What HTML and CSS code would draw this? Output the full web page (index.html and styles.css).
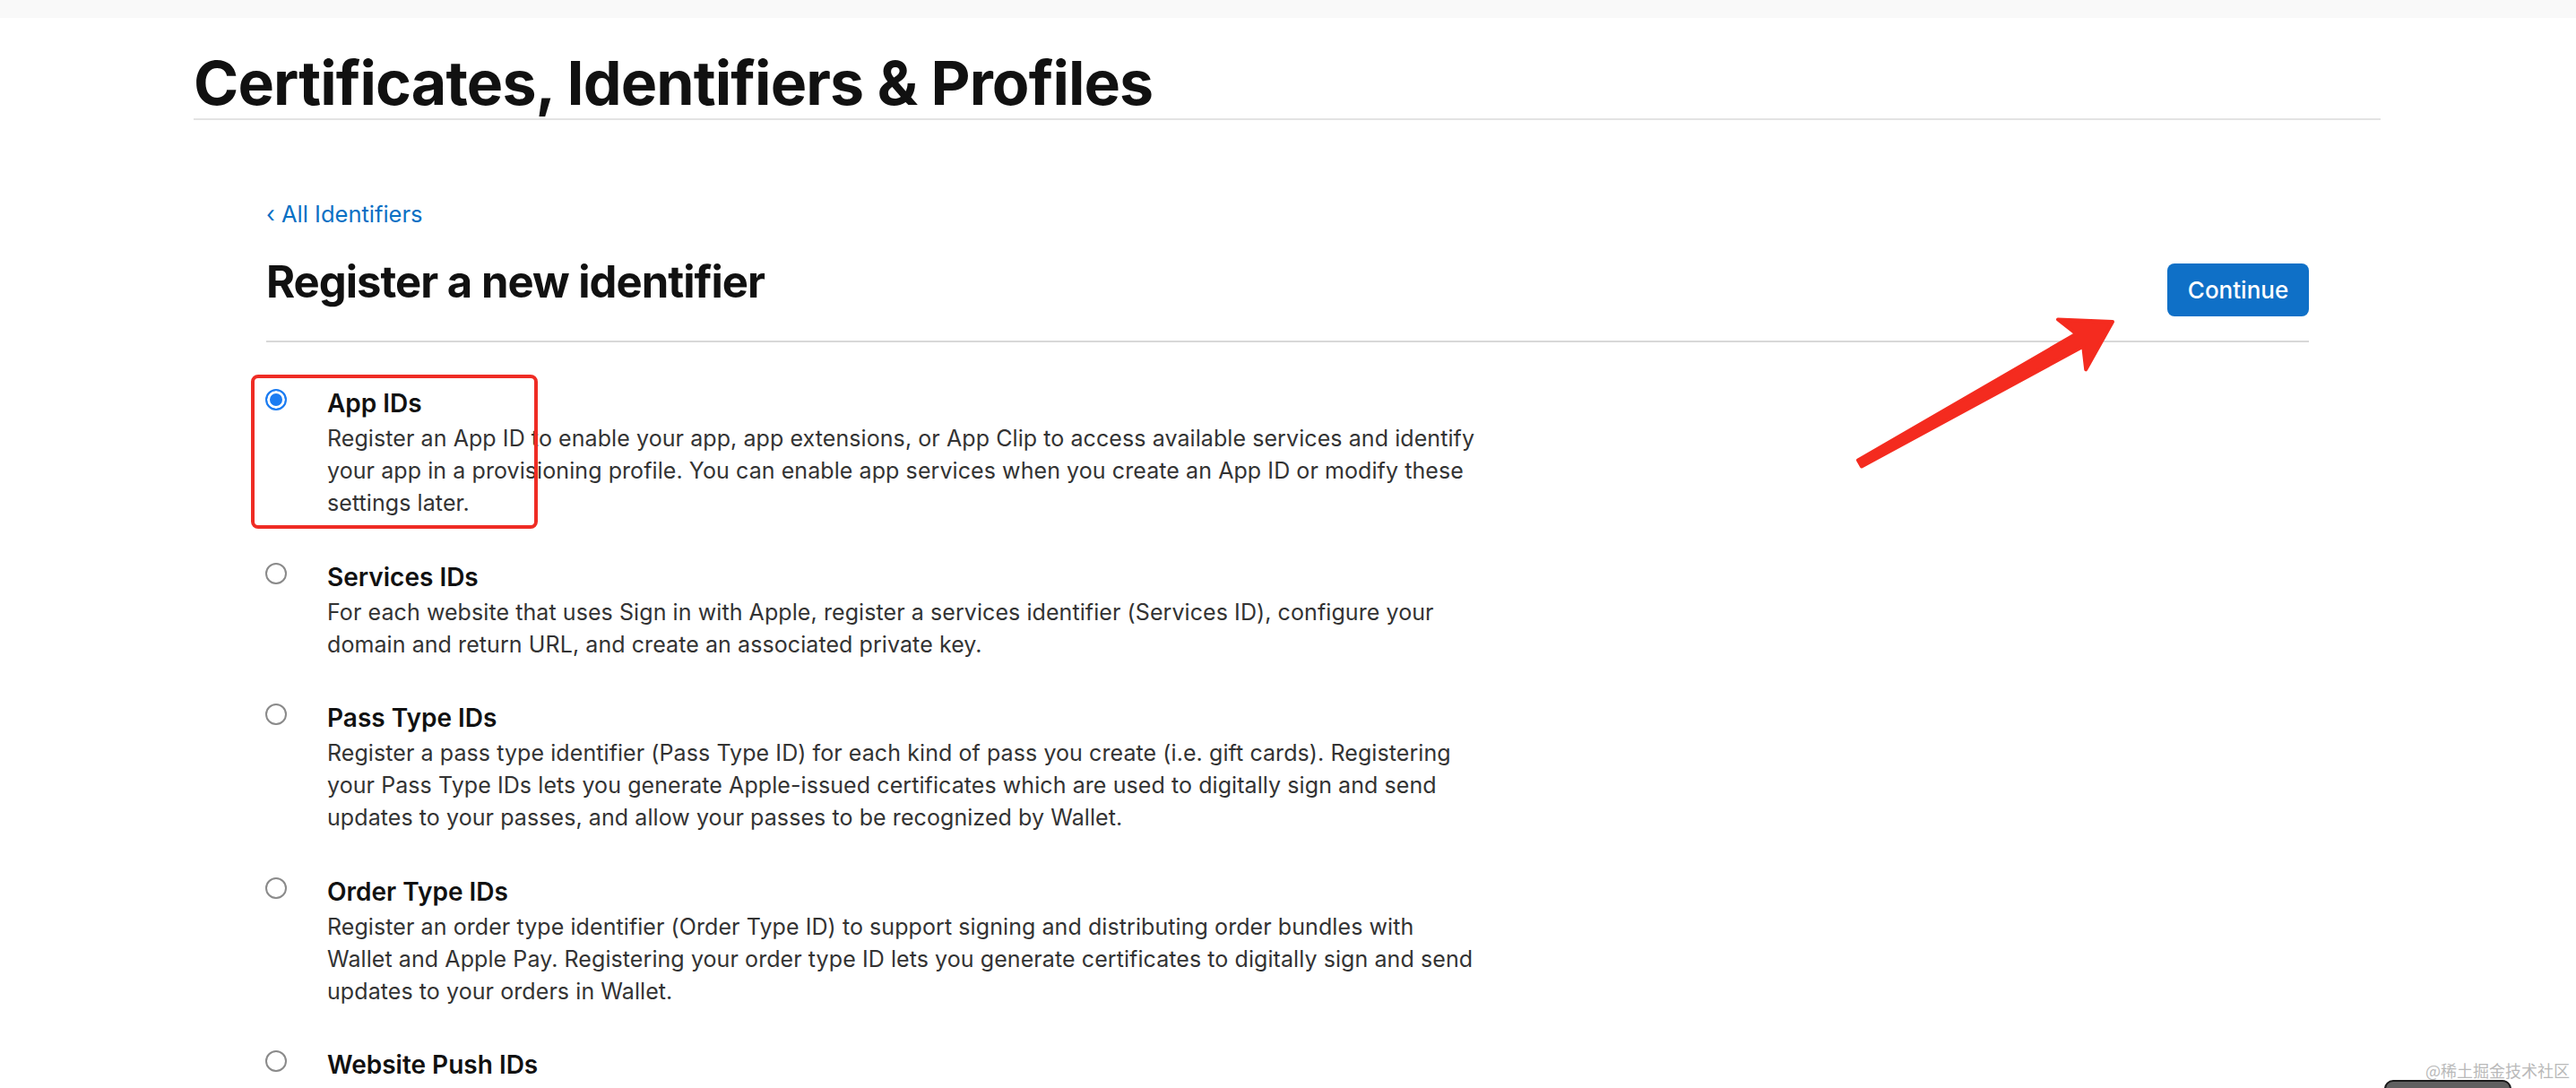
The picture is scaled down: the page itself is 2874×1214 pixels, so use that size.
FILE: index.html
```html
<!DOCTYPE html>
<html lang="en">
<head>
<meta charset="utf-8">
<title>Certificates, Identifiers &amp; Profiles</title>
<link rel="stylesheet" href="styles.css">
</head>
<body>
<div class="topbar"></div>

<header class="page-header">
  <h1 class="page-title">Certificates, Identifiers &amp; Profiles</h1>
</header>

<main class="content">
  <a class="back-link" href="#">&#8249; All Identifiers</a>

  <div class="title-row">
    <h2 class="section-title">Register a new identifier</h2>
    <button class="btn-continue" type="button">Continue</button>
  </div>

  <ul class="choices">
    <li class="choice">
      <span class="radio checked"></span>
      <div class="choice-body">
        <div class="choice-title">App IDs</div>
        <p class="choice-desc">Register an App ID to enable your app, app extensions, or App Clip to access available services and identify<br>your app in a provisioning profile. You can enable app services when you create an App ID or modify these<br>settings later.</p>
      </div>
    </li>
    <li class="choice">
      <span class="radio"></span>
      <div class="choice-body">
        <div class="choice-title">Services IDs</div>
        <p class="choice-desc">For each website that uses Sign in with Apple, register a services identifier (Services ID), configure your<br>domain and return URL, and create an associated private key.</p>
      </div>
    </li>
    <li class="choice">
      <span class="radio"></span>
      <div class="choice-body">
        <div class="choice-title">Pass Type IDs</div>
        <p class="choice-desc">Register a pass type identifier (Pass Type ID) for each kind of pass you create (i.e. gift cards). Registering<br>your Pass Type IDs lets you generate Apple-issued certificates which are used to digitally sign and send<br>updates to your passes, and allow your passes to be recognized by Wallet.</p>
      </div>
    </li>
    <li class="choice">
      <span class="radio"></span>
      <div class="choice-body">
        <div class="choice-title">Order Type IDs</div>
        <p class="choice-desc">Register an order type identifier (Order Type ID) to support signing and distributing order bundles with<br>Wallet and Apple Pay. Registering your order type ID lets you generate certificates to digitally sign and send<br>updates to your orders in Wallet.</p>
      </div>
    </li>
    <li class="choice">
      <span class="radio"></span>
      <div class="choice-body">
        <div class="choice-title">Website Push IDs</div>
      </div>
    </li>
  </ul>
</main>

<div class="mark-box"></div>
<svg class="mark-arrow" width="2874" height="1214" viewBox="0 0 2874 1214" aria-hidden="true">
  <path d="M2073 513.5 L2316.4 372.5 L2296 356.5 L2357 359 L2327.2 412.3 L2324.2 386.5 L2077 520.5 Z" fill="#f42b1f" stroke="#f42b1f" stroke-width="4" stroke-linejoin="round"/>
</svg>

<div class="watermark">@稀土掘金技术社区</div>
<div class="float-widget"></div>
</body>
</html>
```

FILE: styles.css
```css
html, body {
  margin: 0;
  padding: 0;
}

body {
  position: relative;
  width: 2874px;
  height: 1214px;
  overflow: hidden;
  background: #ffffff;
  font-family: Inter, "Noto Sans", "Liberation Sans", sans-serif;
  color: #1d1d1f;
}

.topbar {
  height: 20px;
  background: #f9f9f9;
}

.page-header {
  margin: 32px 218px 0 216px;
  border-bottom: 2px solid #e3e3e3;
}

.page-title {
  margin: 0;
  font-size: 68px;
  line-height: 80px;
  font-weight: 700;
  letter-spacing: -0.013em;
  color: #111111;
}

.content {
  margin: 0 298px 0 297px;
}

.back-link {
  display: block;
  margin-top: 87px;
  font-size: 25.5px;
  line-height: 36px;
  color: #0a70c4;
  text-decoration: none;
}

.title-row {
  display: flex;
  justify-content: space-between;
  align-items: flex-start;
  margin-top: 28px;
  padding-bottom: 27px;
  border-bottom: 2px solid #d8d8d8;
}

.section-title {
  margin: 0;
  font-size: 49px;
  line-height: 60px;
  font-weight: 700;
  letter-spacing: -0.02em;
  color: #111111;
}

.btn-continue {
  margin-top: 9px;
  width: 158px;
  height: 59px;
  border: 0;
  border-radius: 8px;
  background: #0f70c7;
  color: #ffffff;
  font-family: Inter, "Noto Sans", sans-serif;
  font-size: 26px;
  font-weight: 500;
  padding: 0;
}

.choices {
  list-style: none;
  margin: 50px 0 0 0;
  padding: 0;
}

.choice {
  display: flex;
  align-items: flex-start;
  margin-bottom: 46.5px;
}

.radio {
  flex: none;
  box-sizing: border-box;
  width: 24px;
  height: 24px;
  margin: 2px 0 0 -1px;
  border-radius: 50%;
  border: 2px solid #8a8a8a;
  background: #ffffff;
}

.radio.checked {
  border: 2px solid #1b7cf2;
  background: #1b7cf2;
  box-shadow: inset 0 0 0 3px #ffffff;
}

.choice-body {
  margin-left: 45px;
}

.choice-title {
  font-size: 28px;
  line-height: 36px;
  font-weight: 600;
  color: #111111;
}

.choice-desc {
  margin: 3px 0 0 0;
  font-size: 25px;
  line-height: 36px;
  letter-spacing: 0.08px;
  color: #333333;
}

.mark-box {
  position: absolute;
  left: 280px;
  top: 418px;
  width: 320px;
  height: 172px;
  box-sizing: border-box;
  border: 4px solid #ef2c24;
  border-radius: 8px;
}

.mark-arrow {
  position: absolute;
  left: 0;
  top: 0;
  pointer-events: none;
}

.watermark {
  position: absolute;
  left: 2706px;
  top: 1182px;
  font-family: "Noto Sans CJK SC", "Noto Sans", sans-serif;
  font-size: 18px;
  line-height: 24px;
  color: #b9b9b9;
}

.float-widget {
  position: absolute;
  left: 2660px;
  top: 1205px;
  width: 142px;
  height: 30px;
  box-sizing: border-box;
  border: 2px solid #1a1a1a;
  border-radius: 10px;
  background: #606060;
}
```
